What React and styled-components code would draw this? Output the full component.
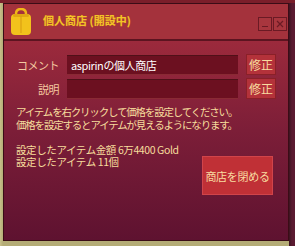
import React from 'react';
import styled, { createGlobalStyle } from 'styled-components';

const GlobalStyle = createGlobalStyle`
  html, body {
    margin: 0;
    padding: 0;
    width: 295px;
    height: 246px;
    overflow: hidden;
    background: #a8a06a;
  }
`;

const Backdrop = styled.div`
  width: 295px;
  height: 246px;
  box-sizing: border-box;
  padding: 3px 6px 5px 3px;
  background:
    linear-gradient(to bottom, #7a1e2a 0, #7a1e2a 3px, transparent 3px),
    linear-gradient(to right, #c8c08a 0, #b4ac76 3px, #b4ac76 289px, #3c1420 289px, #5a1a30 292px);
  font-family: 'Noto Sans CJK JP', 'Noto Sans', sans-serif;
`;

const Window = styled.div`
  height: 100%;
  display: flex;
  flex-direction: column;
  border: 1px solid #3a0c16;
  box-sizing: border-box;
`;

const TitleBar = styled.div`
  height: 35px;
  display: flex;
  align-items: center;
  padding: 0 1px 0 6px;
  background: #a4323c;
  border-bottom: 2px solid #5c1420;
`;

const Title = styled.span`
  margin-left: 11px;
  margin-top: -3px;
  color: #f2c428;
  font-size: 11px;
  font-weight: bold;
  text-shadow: 0 0 1px #c06020;
  flex: 1;
`;

const WinButton = styled.div`
  width: 12px;
  height: 12px;
  margin-left: 1px;
  margin-top: 5px;
  border: 1px solid #6a1a24;
  background: #a8363e;
  display: flex;
  align-items: center;
  justify-content: center;
`;

const Body = styled.div`
  flex: 1;
  display: flex;
  flex-direction: column;
  padding: 13px 15px 0 8px;
  background: linear-gradient(to bottom, #9c2a3c 0%, #7c1e38 45%, #5e1230 100%);
  color: #f6dc9c;
  font-size: 10.5px;
`;

const FormGrid = styled.div`
  display: grid;
  grid-template-columns: 47px 171px 30px;
  column-gap: 8px;
  row-gap: 3px;
  align-items: center;
`;

const Label = styled.span`
  text-align: right;
  color: #f4c8a0;
  font-size: 11px;
  letter-spacing: -0.5px;
`;

const Field = styled.div`
  height: 20px;
  box-sizing: border-box;
  padding: 0 4px;
  display: flex;
  align-items: center;
  background: #6c1020;
  border-top: 1px solid #501018;
  border-bottom: 1px solid #8a2a34;
  color: #ffffff;
  font-size: 11px;
  letter-spacing: -0.4px;
`;

const SmallButton = styled.div`
  height: 19px;
  display: flex;
  align-items: center;
  justify-content: center;
  background: #b4323a;
  border: 1px solid #8a2028;
  color: #f8dca0;
  font-size: 12px;
`;

const Notes = styled.div`
  margin-top: 6px;
  margin-left: 4px;
  letter-spacing: -1.2px;
  white-space: nowrap;
`;

const Line = styled.div`
  height: ${p => p.$h || 13}px;
  line-height: ${p => p.$h || 13}px;
`;

const Bottom = styled.div`
  display: flex;
  justify-content: space-between;
  align-items: flex-start;
  margin-top: 13px;
  margin-left: 4px;
`;

const Stats = styled.div`
  letter-spacing: -0.4px;
  white-space: nowrap;
`;

const CloseShop = styled.div`
  width: 71px;
  height: 39px;
  margin-top: 12px;
  display: flex;
  align-items: center;
  justify-content: center;
  background: #c03036;
  border: 1px solid #d0444a;
  box-sizing: border-box;
  color: #f8dca0;
  font-size: 11px;
  letter-spacing: -0.3px;
  white-space: nowrap;
`;

const BagIcon = () => (
  <svg width="22" height="28" viewBox="0 0 22 28">
    <path d="M6 6 Q6 1 11 1 Q16 1 16 6" fill="none" stroke="#f0b818" strokeWidth="2.5" />
    <rect x="1" y="6" width="20" height="21" rx="4" fill="#f2c21c" />
    <rect x="3" y="6" width="16" height="3" rx="1.5" fill="#e0a812" />
    <line x1="11" y1="8" x2="11" y2="25" stroke="#d89a10" strokeWidth="1" />
  </svg>
);

export default function App() {
  return (
    <Backdrop>
      <GlobalStyle />
      <Window>
        <TitleBar>
          <BagIcon />
          <Title>個人商店 (開設中)</Title>
          <WinButton>
            <svg width="8" height="8" viewBox="0 0 8 8">
              <line x1="1" y1="6.5" x2="7" y2="6.5" stroke="#6a1a24" strokeWidth="1" />
            </svg>
          </WinButton>
          <WinButton>
            <svg width="8" height="8" viewBox="0 0 8 8">
              <path d="M1 1 L7 7 M7 1 L1 7" stroke="#6a1a24" strokeWidth="1.2" />
            </svg>
          </WinButton>
        </TitleBar>
        <Body>
          <FormGrid>
            <Label>コメント</Label>
            <Field>aspirinの個人商店</Field>
            <SmallButton>修正</SmallButton>
            <Label>説明</Label>
            <Field />
            <SmallButton>修正</SmallButton>
          </FormGrid>
          <Notes>
            <Line>アイテムを右クリックして価格を設定してください。</Line>
            <Line>価格を設定するとアイテムが見えるようになります。</Line>
          </Notes>
          <Bottom>
            <Stats>
              <Line $h={12}>設定したアイテム金額 6万4400 Gold</Line>
              <Line $h={12}>設定したアイテム 11個</Line>
            </Stats>
            <CloseShop>商店を閉める</CloseShop>
          </Bottom>
        </Body>
      </Window>
    </Backdrop>
  );
}
